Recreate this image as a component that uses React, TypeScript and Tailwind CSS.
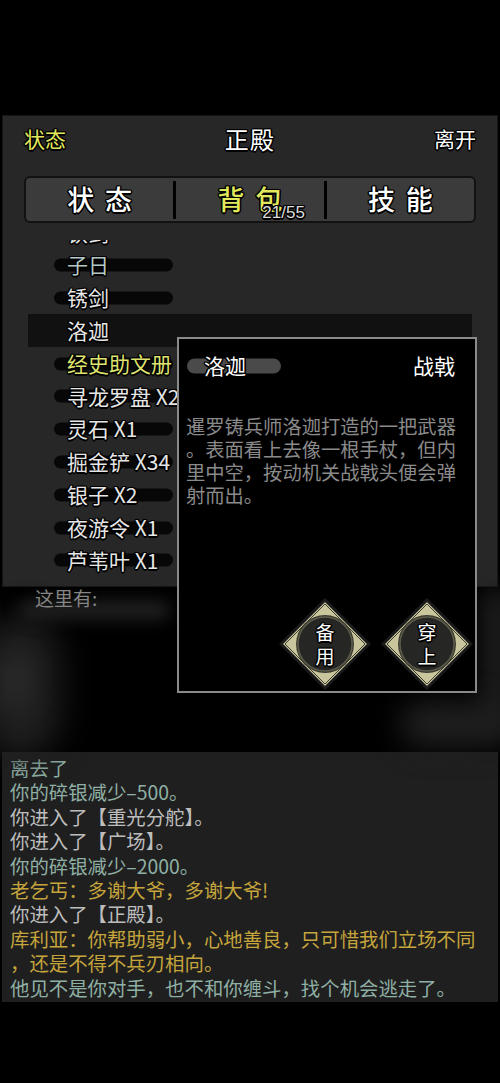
import React from "react";

const outline =
  "[text-shadow:_-1px_-1px_0_#000,_1px_-1px_0_#000,_-1px_1px_0_#000,_1px_1px_0_#000,_0_1.5px_0_#000,_0_-1.5px_0_#000,_1.5px_0_0_#000,_-1.5px_0_0_#000]";

const items = [
  { name: "铁剑", color: "text-[#e6e6e6]" },
  { name: "子日", color: "text-[#b3c9c6]" },
  { name: "锈剑", color: "text-[#e6e6e6]" },
  { name: "洛迦", color: "text-[#e6e6e6]", selected: true },
  { name: "经史助文册", color: "text-[#dfe36f]" },
  { name: "寻龙罗盘 X2", color: "text-[#e6e6e6]" },
  { name: "灵石 X1", color: "text-[#e6e6e6]" },
  { name: "掘金铲 X34", color: "text-[#e6e6e6]" },
  { name: "银子 X2", color: "text-[#e6e6e6]" },
  { name: "夜游令 X1", color: "text-[#e6e6e6]" },
  { name: "芦苇叶 X1", color: "text-[#e6e6e6]" },
];

const log = [
  { text: "离去了", color: "text-[#8fb0a5]" },
  { text: "你的碎银减少–500。", color: "text-[#8fb0a5]" },
  { text: "你进入了【重光分舵】。", color: "text-[#bdbdbd]" },
  { text: "你进入了【广场】。", color: "text-[#bdbdbd]" },
  { text: "你的碎银减少–2000。", color: "text-[#8fb0a5]" },
  { text: "老乞丐：多谢大爷，多谢大爷!", color: "text-[#c6a53c]" },
  { text: "你进入了【正殿】。", color: "text-[#bdbdbd]" },
  { text: "库利亚：你帮助弱小，心地善良，只可惜我们立场不同", color: "text-[#c6a53c]" },
  { text: "，还是不得不兵刃相向。", color: "text-[#c6a53c]" },
  { text: "他见不是你对手，也不和你缠斗，找个机会逃走了。", color: "text-[#8fb0a5]" },
];

function Diamond({ top, bottom }: { top: string; bottom: string }) {
  return (
    <div className="relative w-[92px] h-[92px]">
      <svg width="92" height="92" viewBox="0 0 92 92" className="absolute inset-0">
        <polygon points="46,2 90,46 46,90 2,46" fill="#c9c69d" stroke="#1a1a1a" strokeWidth="3" />
        <polygon points="46,6 86,46 46,86 6,46" fill="none" stroke="#3a3a30" strokeWidth="1" />
        <circle cx="46" cy="46" r="29" fill="#3b3b30" />
        <circle cx="46" cy="46" r="27" fill="#262624" stroke="#5d5c4a" strokeWidth="1.5" />
      </svg>
      <div
        className={`absolute inset-0 flex flex-col items-center justify-center text-[19px] leading-[24px] text-white ${outline}`}
      >
        <span>{top}</span>
        <span>{bottom}</span>
      </div>
    </div>
  );
}

export default function App() {
  return (
    <div className="relative w-[500px] h-[1083px] bg-black overflow-hidden font-['Noto_Sans_CJK_SC','Noto_Sans',sans-serif]">
      <div className="h-[115px]" />

      {/* main panel */}
      <div className="mx-[2px] h-[472px] bg-[#272727] border border-[#161616] flex flex-col">
        <div className="h-[46px] flex items-center justify-between px-[21px]">
          <span className={`text-[21px] text-[#e2e85c] ${outline}`}>状态</span>
          <span className={`text-[24px] text-white tracking-[0.05em] ${outline}`}>正殿</span>
          <span className={`text-[21px] text-white ${outline}`}>离开</span>
        </div>

        <div className="mt-[14px] mx-[21px] h-[47px] rounded-[6px] border-2 border-[#121212] bg-[#3b3b3b] flex items-center">
          <div className="flex-1 flex justify-center">
            <span className={`text-[27px] font-medium text-white tracking-[0.4em] pl-[0.4em] ${outline}`}>状态</span>
          </div>
          <div className="w-[3px] h-[38px] bg-black" />
          <div className="relative flex-1 flex justify-center">
            <span className={`text-[27px] font-medium text-[#e2e85c] tracking-[0.4em] pl-[0.4em] ${outline}`}>背包</span>
            <span
              className={`absolute left-[86px] top-[25px] text-[17px] leading-none text-[#dcdcdc] font-['Liberation_Sans',sans-serif] ${outline}`}
            >
              21/55
            </span>
          </div>
          <div className="w-[3px] h-[38px] bg-black" />
          <div className="flex-1 flex justify-center">
            <span className={`text-[27px] font-medium text-white tracking-[0.4em] pl-[0.4em] ${outline}`}>技能</span>
          </div>
        </div>

        <div className="mt-[17px] flex-1 overflow-hidden">
          <div className="-mt-[24px]">
            {items.map((it) => (
              <div
                key={it.name}
                className={`h-[32.8px] flex items-center mx-[25px] ${it.selected ? "bg-[#111111]" : ""}`}
              >
                <div className="relative ml-[26px] h-full flex items-center">
                  {!it.selected && (
                    <div className="absolute left-0 top-1/2 -translate-y-1/2 w-[119px] h-[13px] rounded-full bg-[#070707]" />
                  )}
                  <span className={`relative ml-[13px] text-[21px] whitespace-nowrap ${it.color} ${outline}`}>
                    {it.name}
                  </span>
                </div>
              </div>
            ))}
          </div>
        </div>
      </div>

      {/* smoke area */}
      <div className="relative h-[165px]">
        <div className="absolute left-[-20px] top-[30px] w-[80px] h-[140px] rounded-full bg-[#1f1f1f] blur-[16px]" />
        <div className="absolute left-[20px] top-[14px] w-[150px] h-[18px] rounded-full bg-[#222222] blur-[8px]" />
        <div className="absolute left-[0px] top-[70px] w-[30px] h-[50px] rounded-full bg-[#2a2a2a] blur-[12px]" />
        <div className="absolute right-[-15px] top-[0px] w-[35px] h-[150px] rounded-full bg-[#1c1c1c] blur-[12px]" />
        <div className="absolute right-[-10px] top-[115px] w-[110px] h-[45px] rounded-full bg-[#1f1f1f] blur-[14px]" />
        <div className="relative pl-[35px] pt-[0px] text-[19px] leading-[22px] text-[#858585]">这里有:</div>
      </div>

      {/* log */}
      <div className="mx-[2px] h-[250px] bg-[#1f1f1f] pl-[8px] pt-[4px] text-[19.4px] leading-[24.4px]">
        {log.map((l, i) => (
          <div key={i} className={`whitespace-nowrap ${l.color}`}>
            {l.text}
          </div>
        ))}
      </div>

      {/* item popup */}
      <div className="absolute left-[177px] top-[337px] w-[300px] h-[356px] bg-black border-2 border-[#8a8a8a] flex flex-col">
        <div className="mt-[11px] flex items-center justify-between pl-[8px] pr-[20px]">
          <div className="relative flex items-center">
            <div className="absolute left-0 top-1/2 -translate-y-1/2 w-[94px] h-[15px] rounded-full bg-[#4a4a4a]" />
            <span className={`relative ml-[17px] text-[21px] text-white ${outline}`}>洛迦</span>
          </div>
          <span className={`text-[21px] text-white ${outline}`}>战戟</span>
        </div>
        <div className="mt-[33px] pl-[7px] text-[19.3px] leading-[23.3px] text-[#8a8a8a] whitespace-nowrap">
          <div>暹罗铸兵师洛迦打造的一把武器</div>
          <div>。表面看上去像一根手杖，但内</div>
          <div>里中空，按动机关战戟头便会弹</div>
          <div>射而出。</div>
        </div>
        <div className="mt-auto mb-[1px] mr-[2px] flex justify-end gap-[10px]">
          <Diamond top="备" bottom="用" />
          <Diamond top="穿" bottom="上" />
        </div>
      </div>
    </div>
  );
}
